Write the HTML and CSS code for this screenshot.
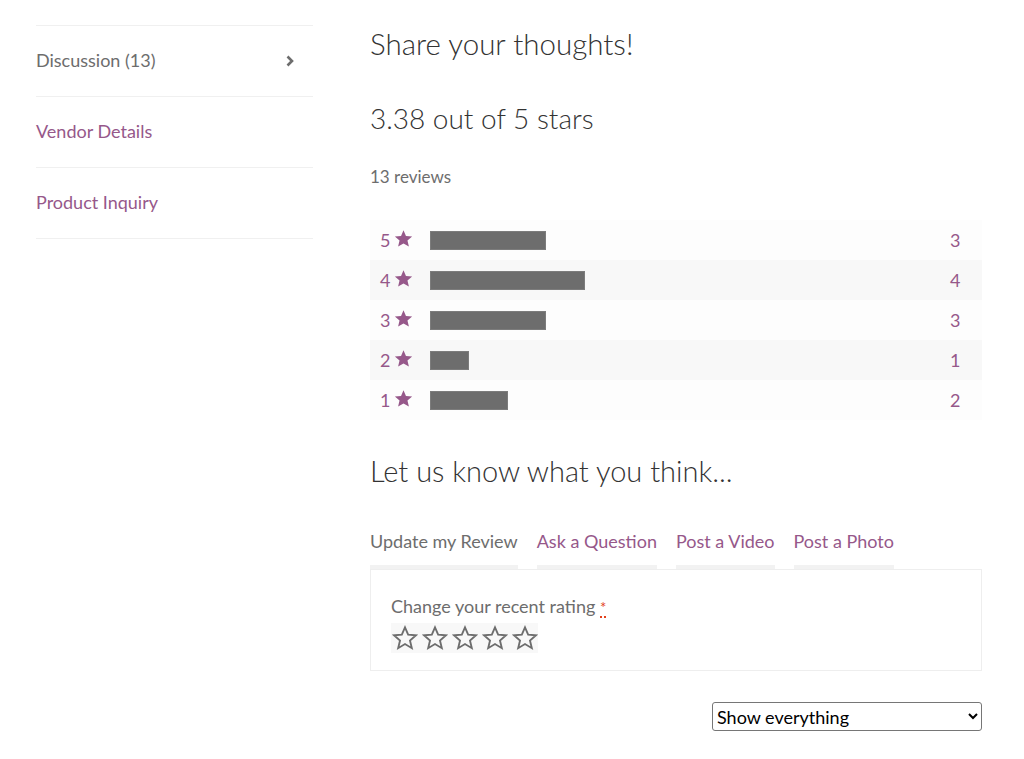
FILE: index.html
```html
<!DOCTYPE html>
<html lang="en">

<head>
    <meta charset="UTF-8">
    <meta name="viewport" content="width=device-width, initial-scale=1.0">
    <title>Product Reviews</title>
    <link rel="stylesheet" href="styles.css">
</head>

<body>
    <div class="page">
        <ul class="side-tabs">
            <li class="side-tab side-tab-current">
                <span>Discussion (13)</span>
                <svg class="chevron" width="10" height="12" viewBox="0 0 10 12">
                    <path d="M2.5 1.5 L7 6 L2.5 10.5" fill="none" stroke="#6d6d6d" stroke-width="2.6" />
                </svg>
            </li>
            <li class="side-tab"><a href="#">Vendor Details</a></li>
            <li class="side-tab"><a href="#">Product Inquiry</a></li>
        </ul>

        <div class="main">
            <h2 class="section-title">Share your thoughts!</h2>
            <h3 class="average">3.38 out of 5 stars</h3>
            <p class="review-count">13 reviews</p>

            <div class="breakdown">
                <div class="breakdown-row">
                    <span class="breakdown-label">5 <svg class="star" viewBox="0 0 24 24"><path d="M12 1.5l3.1 7.2 7.8.7-5.9 5.2 1.8 7.6L12 18.2l-6.8 4 1.8-7.6-5.9-5.2 7.8-.7z" /></svg></span>
                    <span class="breakdown-track"><span class="breakdown-bar" style="width: 23.08%"></span></span>
                    <span class="breakdown-count">3</span>
                </div>
                <div class="breakdown-row">
                    <span class="breakdown-label">4 <svg class="star" viewBox="0 0 24 24"><path d="M12 1.5l3.1 7.2 7.8.7-5.9 5.2 1.8 7.6L12 18.2l-6.8 4 1.8-7.6-5.9-5.2 7.8-.7z" /></svg></span>
                    <span class="breakdown-track"><span class="breakdown-bar" style="width: 30.77%"></span></span>
                    <span class="breakdown-count">4</span>
                </div>
                <div class="breakdown-row">
                    <span class="breakdown-label">3 <svg class="star" viewBox="0 0 24 24"><path d="M12 1.5l3.1 7.2 7.8.7-5.9 5.2 1.8 7.6L12 18.2l-6.8 4 1.8-7.6-5.9-5.2 7.8-.7z" /></svg></span>
                    <span class="breakdown-track"><span class="breakdown-bar" style="width: 23.08%"></span></span>
                    <span class="breakdown-count">3</span>
                </div>
                <div class="breakdown-row">
                    <span class="breakdown-label">2 <svg class="star" viewBox="0 0 24 24"><path d="M12 1.5l3.1 7.2 7.8.7-5.9 5.2 1.8 7.6L12 18.2l-6.8 4 1.8-7.6-5.9-5.2 7.8-.7z" /></svg></span>
                    <span class="breakdown-track"><span class="breakdown-bar" style="width: 7.69%"></span></span>
                    <span class="breakdown-count">1</span>
                </div>
                <div class="breakdown-row">
                    <span class="breakdown-label">1 <svg class="star" viewBox="0 0 24 24"><path d="M12 1.5l3.1 7.2 7.8.7-5.9 5.2 1.8 7.6L12 18.2l-6.8 4 1.8-7.6-5.9-5.2 7.8-.7z" /></svg></span>
                    <span class="breakdown-track"><span class="breakdown-bar" style="width: 15.38%"></span></span>
                    <span class="breakdown-count">2</span>
                </div>
            </div>

            <h3 class="section-title think">Let us know what you think...</h3>

            <ul class="form-tabs">
                <li class="form-tab form-tab-active">Update my Review</li>
                <li class="form-tab"><a href="#">Ask a Question</a></li>
                <li class="form-tab"><a href="#">Post a Video</a></li>
                <li class="form-tab"><a href="#">Post a Photo</a></li>
            </ul>

            <div class="form-box">
                <label class="form-label">Change your recent rating <abbr class="required" title="required">*</abbr></label>
                <div class="rating-input">
                    <svg class="star-empty" viewBox="0 0 24 24"><path d="M12 2.2l2.9 6.7 7.2.6-5.5 4.8 1.7 7.1L12 17.6l-6.3 3.8 1.7-7.1-5.5-4.8 7.2-.6z" /></svg>
                    <svg class="star-empty" viewBox="0 0 24 24"><path d="M12 2.2l2.9 6.7 7.2.6-5.5 4.8 1.7 7.1L12 17.6l-6.3 3.8 1.7-7.1-5.5-4.8 7.2-.6z" /></svg>
                    <svg class="star-empty" viewBox="0 0 24 24"><path d="M12 2.2l2.9 6.7 7.2.6-5.5 4.8 1.7 7.1L12 17.6l-6.3 3.8 1.7-7.1-5.5-4.8 7.2-.6z" /></svg>
                    <svg class="star-empty" viewBox="0 0 24 24"><path d="M12 2.2l2.9 6.7 7.2.6-5.5 4.8 1.7 7.1L12 17.6l-6.3 3.8 1.7-7.1-5.5-4.8 7.2-.6z" /></svg>
                    <svg class="star-empty" viewBox="0 0 24 24"><path d="M12 2.2l2.9 6.7 7.2.6-5.5 4.8 1.7 7.1L12 17.6l-6.3 3.8 1.7-7.1-5.5-4.8 7.2-.6z" /></svg>
                </div>
            </div>

            <div class="filter">
                <select class="filter-select">
                    <option>Show everything</option>
                    <option>Reviews</option>
                    <option>Questions</option>
                </select>
            </div>
        </div>
    </div>
</body>

</html>
```

FILE: styles.css
```css
body {
    margin: 0;
    font-family: "Lato", "Liberation Sans", sans-serif;
    font-size: 18px;
    color: #6d6d6d;
    background: #fff;
}

a {
    color: #96588a;
    text-decoration: none;
}

.page {
    display: flex;
    align-items: flex-start;
    padding-left: 36px;
    padding-top: 25px;
}

.side-tabs {
    list-style: none;
    margin: 0;
    padding: 0;
    width: 277px;
    border-top: 1px solid #f0f0f0;
    flex-shrink: 0;
}

.side-tab {
    display: flex;
    align-items: center;
    justify-content: space-between;
    height: 70px;
    border-bottom: 1px solid #f0f0f0;
    line-height: 24px;
}

.side-tab span,
.side-tab a {
    margin-top: -2px;
}

.chevron {
    margin-right: 18px;
}

.main {
    width: 612px;
    margin-left: 57px;
    margin-top: -25px;
}

.section-title,
.average {
    font-weight: 300;
    color: #333;
    margin: 0;
}

.section-title {
    font-size: 29.5px;
    line-height: 38px;
    padding-top: 25px;
}

.average {
    font-size: 28px;
    line-height: 38px;
    margin-top: 36px;
}

.review-count {
    margin: 28px 0 0;
    font-size: 17px;
    line-height: 24px;
}

.breakdown {
    margin-top: 31px;
}

.breakdown-row {
    display: flex;
    align-items: center;
    height: 40px;
    padding-left: 10px;
    background: #fdfdfd;
    line-height: 24px;
}

.breakdown-row:nth-child(even) {
    background: #f8f8f8;
}

.breakdown-label {
    display: flex;
    align-items: center;
    width: 50px;
    color: #96588a;
}

.star {
    width: 19px;
    height: 19px;
    fill: #96588a;
    margin-left: 4px;
    margin-top: -3px;
}

.breakdown-track {
    width: 504px;
    height: 19px;
}

.breakdown-bar {
    display: block;
    height: 19px;
    background: #6d6d6d;
    box-shadow: inset 0 0 0 1px #7c7c7c;
}

.breakdown-count {
    margin-left: 16px;
    color: #96588a;
}

.think {
    font-size: 29px;
    padding-top: 0;
    margin-top: 32px;
}

.form-tabs {
    list-style: none;
    display: flex;
    gap: 19px;
    margin: 39px 0 0;
    padding: 0;
}

.form-tab {
    padding-bottom: 12px;
    border-bottom: 4px solid #f2f2f2;
    line-height: 24px;
}

.form-box {
    border: 1px solid #eee;
    padding: 24px 20px 15px;
}

.form-label {
    display: block;
    line-height: 24px;
}

.required {
    color: #e2401c;
    text-decoration: none;
    border-bottom: 2px dotted #e2401c;
    font-size: 15px;
}

.rating-input {
    display: inline-flex;
    gap: 4px;
    margin-top: 4px;
    background: #f8f8f8;
    padding: 2px 0 2px 1px;
}

.star-empty {
    width: 26px;
    height: 26px;
    fill: none;
    stroke: #6d6d6d;
    stroke-width: 1.7;
    stroke-linejoin: miter;
}

.filter {
    display: flex;
    justify-content: flex-end;
    margin-top: 31px;
}

.filter-select {
    width: 270px;
    height: 29px;
    font-family: "Lato", "Liberation Sans", sans-serif;
    font-size: 18px;
    color: #000;
    border: 1px solid #767676;
    border-radius: 3px;
    background: #fff;
}
```
